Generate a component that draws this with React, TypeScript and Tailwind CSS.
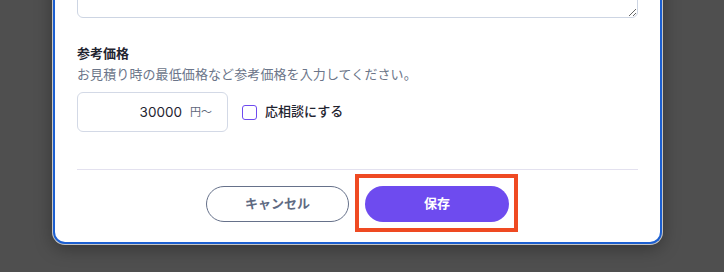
import { useState } from "react";

export default function App() {
  const [price, setPrice] = useState("30000");
  const [negotiable, setNegotiable] = useState(false);

  return (
    <div className="relative h-[272px] w-[724px] overflow-hidden bg-[#4f4f4f] font-['Inter','Noto_Sans_CJK_JP',sans-serif]">
      {/* modal */}
      <div className="ml-[53px] -mt-[42px] w-[609px] rounded-b-[12px] border-2 border-t-0 border-[#1c5fd0] bg-white px-[22px] pb-[20px] shadow-[0_4px_18px_rgba(0,0,0,0.35)] ring-1 ring-white/70">
        <textarea className="block h-[60px] w-full rounded-[6px] border border-[#cdd5e3] bg-white" />

        <div className="mt-[25px] text-[13px] leading-5 font-bold text-[#1f2430]">
          参考価格
        </div>
        <div className="mt-[1px] text-[13px] leading-5 tracking-[0.1px] text-[#6b7589]">
          お見積り時の最低価格など参考価格を入力してください。
        </div>

        <div className="mt-[8px] flex items-center gap-[14px]">
          <div className="flex h-[40px] w-[151px] items-center justify-end gap-[8px] rounded-[6px] border border-[#d3d9e6] pr-[15px]">
            <input
              value={price}
              onChange={(e) => setPrice(e.target.value)}
              className="w-[90px] bg-transparent text-right text-[13.5px] text-[#1f2430] outline-none"
            />
            <span className="text-[11px] text-[#5d667a]">円〜</span>
          </div>
          <label className="flex cursor-pointer items-center gap-[8px]">
            <span
              onClick={() => setNegotiable(!negotiable)}
              className={`h-[15px] w-[15px] rounded-[3px] border-[1.5px] border-[#6e4bef] ${
                negotiable ? "bg-[#6e4bef]" : "bg-white"
              }`}
            />
            <span className="text-[13px] font-medium text-[#1f2430]">応相談にする</span>
          </label>
        </div>

        <div className="mt-[37px] h-px bg-[#e3e1ef]" />

        <div className="mt-[16px] flex justify-center gap-[16px]">
          <button className="h-[36px] w-[143px] rounded-full border border-[#66718a] bg-white text-[13px] font-bold text-[#5f6a82]">
            キャンセル
          </button>
          <button className="h-[36px] w-[144px] rounded-full bg-[#6e4bef] text-[13px] font-bold text-white">
            保存
          </button>
        </div>
      </div>

      {/* highlight annotation */}
      <div className="absolute left-[355px] top-[174px] h-[58px] w-[163px] border-4 border-[#ef4a22]" />
    </div>
  );
}
